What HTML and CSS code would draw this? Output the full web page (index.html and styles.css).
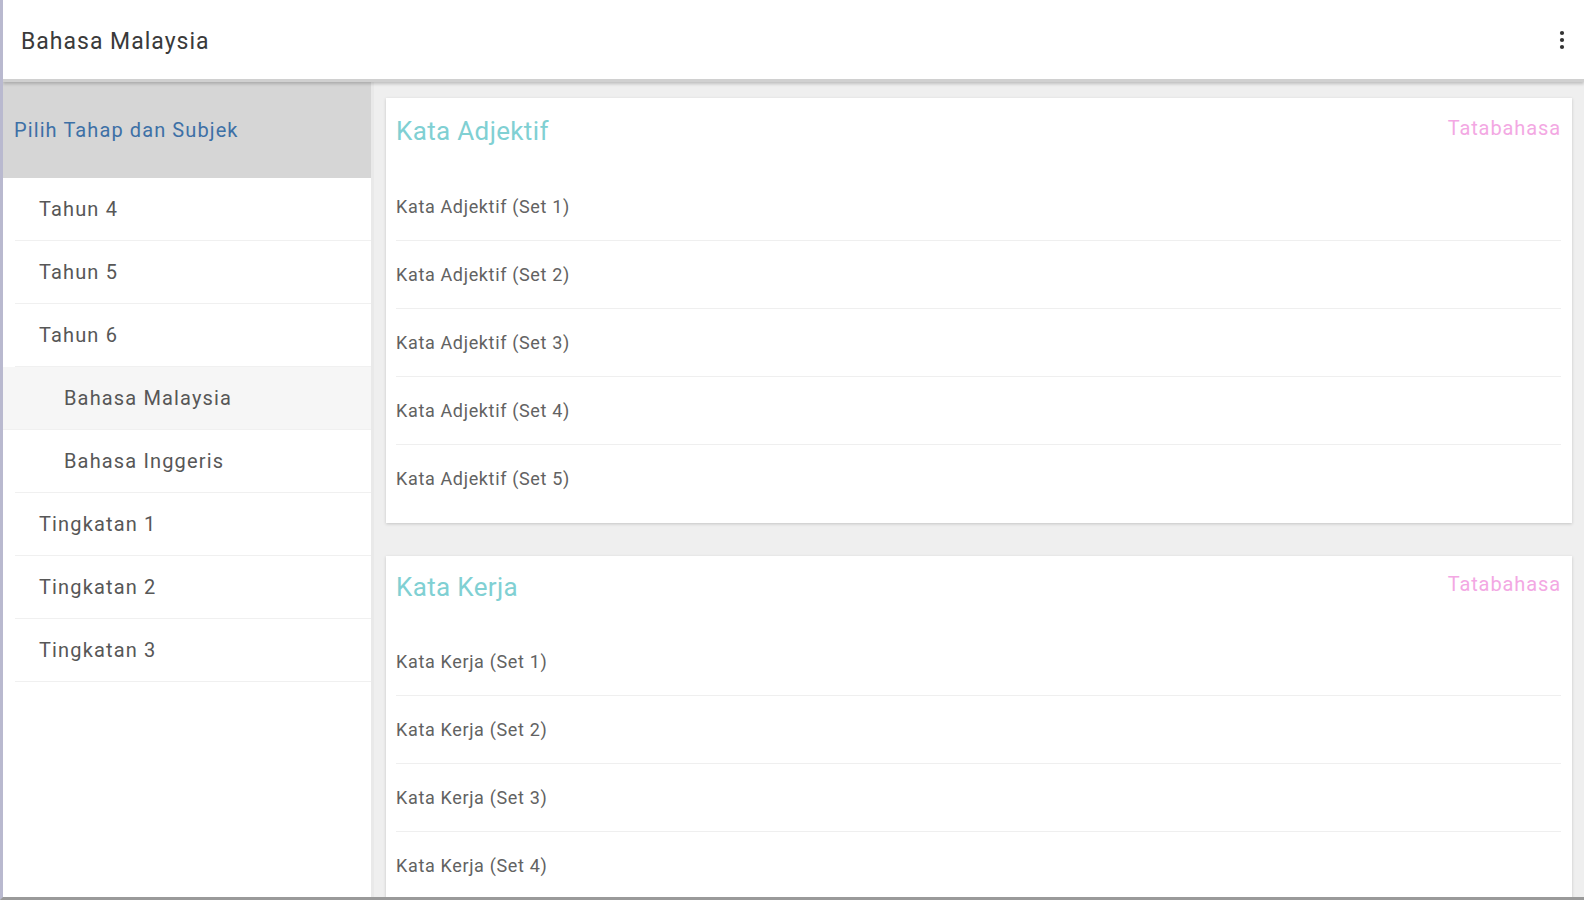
FILE: index.html
```html
<!DOCTYPE html>
<html lang="ms">
<head>
  <meta charset="UTF-8" />
  <meta name="viewport" content="width=device-width, initial-scale=1.0"/>
  <title>Bahasa Malaysia</title>
  <link rel="stylesheet" href="styles.css">
</head>
<body>

  <div class="app">
    <header class="topbar">
      <h1>Bahasa Malaysia</h1>
      <button class="menu-btn" aria-label="Menu">
        <svg width="6" height="20" viewBox="0 0 6 20">
          <circle cx="3" cy="3" r="2.1" fill="#333"/>
          <circle cx="3" cy="10" r="2.1" fill="#333"/>
          <circle cx="3" cy="17" r="2.1" fill="#333"/>
        </svg>
      </button>
    </header>

    <div class="content">
      <nav class="sidebar">
        <div class="sidebar-head">Pilih Tahap dan Subjek</div>
        <div class="nav-item">Tahun 4</div>
        <div class="nav-item">Tahun 5</div>
        <div class="nav-item">Tahun 6</div>
        <div class="nav-item sub active">Bahasa Malaysia</div>
        <div class="nav-item sub">Bahasa Inggeris</div>
        <div class="nav-item">Tingkatan 1</div>
        <div class="nav-item">Tingkatan 2</div>
        <div class="nav-item">Tingkatan 3</div>
      </nav>

      <main class="main">
        <section class="card">
          <div class="card-head">
            <h2>Kata Adjektif</h2>
            <span class="tag">Tatabahasa</span>
          </div>
          <div class="row">Kata Adjektif (Set 1)</div>
          <div class="row">Kata Adjektif (Set 2)</div>
          <div class="row">Kata Adjektif (Set 3)</div>
          <div class="row">Kata Adjektif (Set 4)</div>
          <div class="row">Kata Adjektif (Set 5)</div>
        </section>

        <section class="card">
          <div class="card-head">
            <h2>Kata Kerja</h2>
            <span class="tag">Tatabahasa</span>
          </div>
          <div class="row">Kata Kerja (Set 1)</div>
          <div class="row">Kata Kerja (Set 2)</div>
          <div class="row">Kata Kerja (Set 3)</div>
          <div class="row">Kata Kerja (Set 4)</div>
        </section>
      </main>
    </div>
  </div>

</body>
</html>
```

FILE: styles.css
```css
body {
  margin: 0;
  font-family: Roboto, "Liberation Sans", Arial, sans-serif;
  background: #fff;
  height: 900px;
  overflow: hidden;
}

.app {
  height: 897px;
  border-left: 3px solid #b9b9cf;
  border-bottom: 3px solid #9a9a9a;
  display: flex;
  flex-direction: column;
  overflow: hidden;
}

.topbar {
  height: 79px;
  flex-shrink: 0;
  background: #fff;
  display: flex;
  align-items: center;
  justify-content: space-between;
  padding: 0 19px 0 18px;
  box-shadow: 0 2px 3px rgba(0,0,0,0.2);
  border-bottom: 3px solid #d0d0d0;
  position: relative;
  z-index: 2;
}

.topbar h1 {
  margin: 0;
  padding-top: 3px;
  font-size: 23px;
  font-weight: 400;
  letter-spacing: 1px;
  color: #3a3a3a;
}

.menu-btn {
  background: none;
  border: none;
  padding: 0;
  display: flex;
}

.content {
  flex: 1;
  display: flex;
  min-height: 0;
}

.sidebar {
  width: 368px;
  flex-shrink: 0;
  background: #fff;
  border-right: 3px solid #e9e9e9;
}

.sidebar-head {
  height: 96px;
  background: #d6d6d6;
  color: #3d70a6;
  font-size: 20px;
  letter-spacing: 1.1px;
  display: flex;
  align-items: center;
  padding-left: 11px;
}

.nav-item {
  height: 62px;
  margin-left: 12px;
  padding-left: 24px;
  border-bottom: 1px solid #f0f0f0;
  display: flex;
  align-items: center;
  font-size: 20px;
  letter-spacing: 1.15px;
  color: #575757;
}

.nav-item.sub {
  padding-left: 49px;
}

.nav-item.active {
  margin-left: 0;
  padding-left: 61px;
  background: #f6f6f6;
}

.main {
  flex: 1;
  background: #efefef;
  padding: 16px 12px 0 12px;
  overflow: hidden;
}

.card {
  background: #fff;
  padding: 0 11px 11px 10px;
  margin-bottom: 33px;
  box-shadow: 0 1px 3px rgba(0,0,0,0.18);
}

.card-head {
  height: 75px;
  display: flex;
  justify-content: space-between;
  align-items: flex-start;
}

.card + .card .card-head {
  height: 72px;
}

.card-head h2 {
  margin: 18px 0 0;
  font-size: 26px;
  font-weight: 400;
  letter-spacing: 0.35px;
  color: #80d0d3;
}

.card + .card .card-head h2,
.card + .card .tag {
  margin-top: 16px;
}

.tag {
  margin-top: 18px;
  font-size: 20px;
  letter-spacing: 0.9px;
  color: #f3a8e3;
}

.row {
  height: 67px;
  border-bottom: 1px solid #efefef;
  display: flex;
  align-items: center;
  font-size: 18px;
  letter-spacing: 0.65px;
  color: #626262;
}

.row:last-child {
  border-bottom: none;
}
```
